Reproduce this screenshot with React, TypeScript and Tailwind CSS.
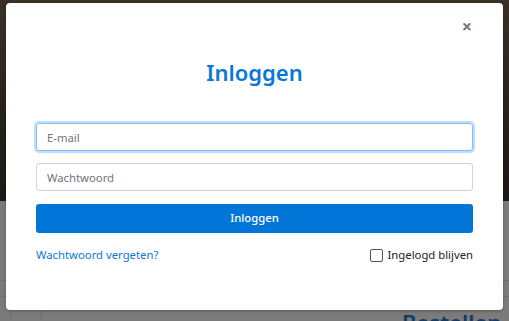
import { useState } from 'react';

export default function App() {
  const [remember, setRemember] = useState(false);

  return (
    <div className="relative h-[321px] w-[509px] overflow-hidden bg-[#7b7b7b] font-['Noto_Sans',sans-serif]">
      {/* Page behind the overlay */}
      <div className="h-[201px] bg-gradient-to-b from-[#3b3128] via-[#2a231d] to-[#1d1915]" />
      <div className="h-[80px] border-b border-[#6e6e6e]" />
      <div className="flex h-[16px] border-b border-[#6e6e6e]" />
      <div className="flex h-[23px]">
        <div className="w-[11px] border-r border-[#6e6e6e]" />
        <div className="w-[31px] border-r border-[#6e6e6e]" />
        <div className="flex-1 pl-[360px] pt-[14px] text-[22px] font-semibold leading-none text-[#143a66]">Bestellen</div>
      </div>

      {/* Login modal */}
      <div className="absolute left-[6px] top-[3px] w-[497px] h-[307px] rounded-[4px] bg-white shadow-[0_1px_3px_rgba(0,0,0,0.3)] px-[30px]">
        <button className="absolute right-[31px] top-[14px] text-[18px] leading-none text-[#777] font-bold">×</button>
        <h2 className="pt-[54px] text-center text-[22px] font-semibold leading-[30px] text-[#0a78d7]">Inloggen</h2>
        <div className="mt-[36px] flex flex-col gap-[12px]">
          <input
            placeholder="E-mail"
            className="h-[28px] w-full rounded-[3px] border border-[#80bdff] px-[10px] text-[11.3px] text-[#495057] placeholder-[#6c757d] outline-none shadow-[0_0_0_2px_rgba(0,123,255,0.25)]"
          />
          <input
            type="password"
            placeholder="Wachtwoord"
            className="h-[28px] w-full rounded-[3px] border border-[#ced4da] px-[10px] text-[11.3px] text-[#495057] placeholder-[#6c757d] outline-none"
          />
          <button className="mt-[1px] h-[29px] w-full rounded-[3px] bg-[#0275d8] text-[11.3px] font-medium text-white">
            Inloggen
          </button>
        </div>
        <div className="mt-[14px] flex items-center justify-between text-[11.3px]">
          <a className="text-[#0a78d7]">Wachtwoord vergeten?</a>
          <label className="flex items-center gap-[5px] text-[#222]">
            <input
              type="checkbox"
              checked={remember}
              onChange={(e) => setRemember(e.target.checked)}
              className="h-[13px] w-[13px] appearance-none rounded-[2px] border border-[#555] bg-white"
            />
            Ingelogd blijven
          </label>
        </div>
      </div>
    </div>
  );
}
